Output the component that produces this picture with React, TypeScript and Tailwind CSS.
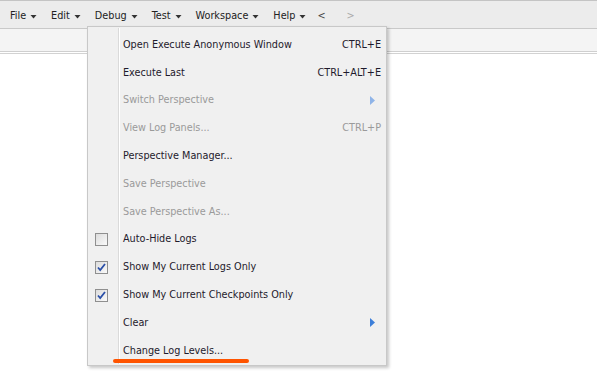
import React from "react";

type Item = {
  label: string;
  shortcut?: string;
  disabled?: boolean;
  submenu?: boolean;
  check?: "on" | "off";
  mark?: boolean;
};

const items: Item[] = [
  { label: "Open Execute Anonymous Window", shortcut: "CTRL+E" },
  { label: "Execute Last", shortcut: "CTRL+ALT+E" },
  { label: "Switch Perspective", disabled: true, submenu: true },
  { label: "View Log Panels...", shortcut: "CTRL+P", disabled: true },
  { label: "Perspective Manager..." },
  { label: "Save Perspective", disabled: true },
  { label: "Save Perspective As...", disabled: true },
  { label: "Auto-Hide Logs", check: "off" },
  { label: "Show My Current Logs Only", check: "on" },
  { label: "Show My Current Checkpoints Only", check: "on" },
  { label: "Clear", submenu: true },
  { label: "Change Log Levels...", mark: true },
];

const menus = ["File", "Edit", "Debug", "Test", "Workspace", "Help"];

function Caret() {
  return (
    <svg width="7" height="4" viewBox="0 0 7 4" className="ml-[4px] mt-[1px]">
      <path d="M0.5 0h6L3.5 3.5z" fill="#333" />
    </svg>
  );
}

function Checkbox({ on }: { on: boolean }) {
  return (
    <div className="w-[13px] h-[13px] border border-[#8f8f8f] bg-gradient-to-br from-[#dcdcdc] to-[#fafafa] flex items-center justify-center">
      {on && (
        <svg width="9" height="9" viewBox="0 0 9 9">
          <path d="M1 4.5l2.2 2.5L8 1" stroke="#2a4fa8" strokeWidth="1.8" fill="none" />
        </svg>
      )}
    </div>
  );
}

function Arrow({ dim }: { dim?: boolean }) {
  return (
    <svg width="5" height="9" viewBox="0 0 5 9" className="mr-[3px]">
      <path d="M0 0l5 4.5L0 9z" fill={dim ? "#8fb4e8" : "#3d7fd9"} />
    </svg>
  );
}

export default function App() {
  return (
    <div
      className="relative w-[597px] h-[381px] bg-white overflow-hidden text-[10.75px]"
      style={{ fontFamily: "'DejaVu Sans Condensed', 'Liberation Sans', sans-serif" }}
    >
      <div className="h-[1px] bg-[#c4c4c4]" />
      <div className="h-[27px] bg-[#ececec] flex items-center pl-[10px] pt-[3px] text-[#222]">
        {menus.map((m) => (
          <div key={m} className="flex items-center mr-[14px]">
            {m}
            <Caret />
          </div>
        ))}
        <span className="-ml-[3px] text-[#444]">&lt;</span>
        <span className="ml-[21px] text-[#aaa]">&gt;</span>
      </div>
      <div className="h-[1px] bg-[#c9c9c9]" />
      <div className="h-[22px] bg-[#f4f4f4]" />
      <div className="h-[1px] bg-[#cfcfcf]" />
      <div className="h-[1px] bg-white" />
      <div className="h-[1px] bg-[#d2d2d2]" />

      <div className="absolute left-[87px] top-[26px] w-[300px] h-[340px] bg-[#f0f0f0] border border-[#c8c8c8] shadow-[2px_2px_3px_rgba(0,0,0,0.22)] pt-[4px]">
        <div className="absolute left-[30px] top-[1px] bottom-[1px] w-[1px] bg-[#dadada]" />
        <div className="absolute left-[31px] top-[1px] bottom-[1px] w-[1px] bg-white" />
        {items.map((it) => (
          <div key={it.label} className="relative h-[27.8px] flex items-center">
            <div className="w-[35px] flex justify-center pl-[5px] pr-[13px]">
              {it.check && <Checkbox on={it.check === "on"} />}
            </div>
            <div className={`flex-1 ${it.disabled ? "text-[#9a9a9a]" : "text-[#1e1a2c]"}`}>{it.label}</div>
            {it.shortcut && (
              <div className={`pr-[5px] ${it.disabled ? "text-[#9a9a9a]" : "text-[#1e1a2c]"}`}>{it.shortcut}</div>
            )}
            {it.submenu && <div className="pr-[8px]"><Arrow dim={it.disabled} /></div>}
            {it.mark && (
              <div className="absolute left-[25px] top-[22px] w-[136px] h-[4px] rounded-full bg-[#ff5400]" />
            )}
          </div>
        ))}
      </div>
    </div>
  );
}
